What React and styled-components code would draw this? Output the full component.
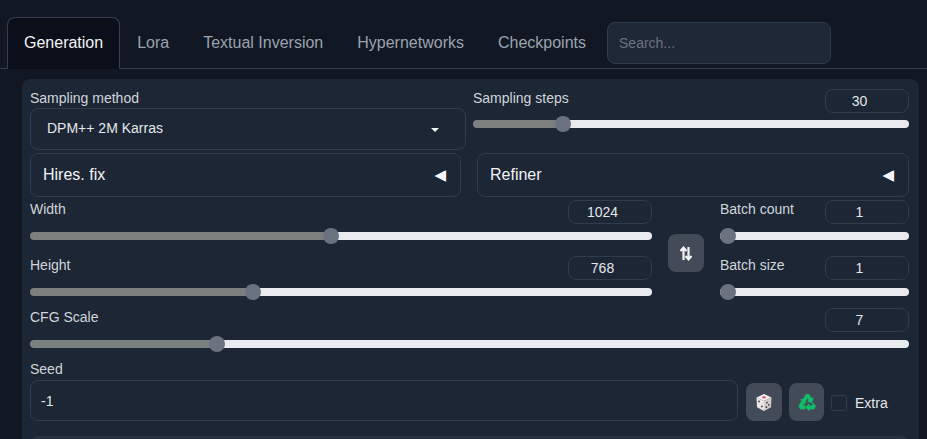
import React from "react";
import styled, { createGlobalStyle } from "styled-components";

const GlobalStyle = createGlobalStyle`
  html, body {
    margin: 0;
    height: 100%;
    background: #111823;
    overflow: hidden;
  }
  * { box-sizing: border-box; }
`;

const Page = styled.div`
  height: 439px;
  overflow: hidden;
  padding-top: 17px;
  font-family: "Liberation Sans", Arial, sans-serif;
  color: #e5e7eb;
`;

const TabBar = styled.div`
  display: flex;
  align-items: stretch;
  height: 52px;
  padding-left: 7px;
  border-bottom: 1px solid #364050;
`;

const Tab = styled.div`
  display: flex;
  align-items: center;
  padding: 0 16px;
  font-size: 16px;
  color: ${(p) => (p.$active ? "#f3f4f6" : "#9ca3af")};
  background: ${(p) => (p.$active ? "#0b0f19" : "transparent")};
  border: 1px solid ${(p) => (p.$active ? "#364050" : "transparent")};
  border-bottom: ${(p) => (p.$active ? "1px solid #0b0f19" : "none")};
  border-radius: 8px 8px 0 0;
  margin-bottom: ${(p) => (p.$active ? "-1px" : "0")};
`;

const SearchBox = styled.input`
  width: 224px;
  height: 42px;
  margin: 5px 0 0 4px;
  padding: 0 11px;
  font: 14px "Liberation Sans", Arial, sans-serif;
  color: #e5e7eb;
  background: #1e2836;
  border: 1px solid #303b4c;
  border-radius: 8px;
  outline: none;
  &::placeholder { color: #6b7280; opacity: 1; }
`;

const Panel = styled.div`
  margin: 10px 8px 0 22px;
  height: 400px;
  padding: 9px 10px 0 8px;
  background: #1c2635;
  border-radius: 8px 8px 0 0;
  display: flex;
  flex-direction: column;
`;

const TwoCols = styled.div`
  display: grid;
  grid-template-columns: 436px 436px;
  column-gap: 7px;
  height: 62px;
`;

const Label = styled.div`
  font-size: 14px;
  line-height: 20px;
  color: #d1d5db;
`;

const HeadLabel = styled(Label)`
  line-height: 18px;
`;

const SelectBox = styled.div`
  height: 42px;
  padding: 0 26px 2px 16px;
  display: flex;
  align-items: center;
  justify-content: space-between;
  font-size: 14px;
  color: #e5e7eb;
  border: 1px solid #303b4c;
  border-radius: 8px;
`;

const SmallCaret = styled.span`
  width: 0;
  height: 0;
  margin-top: 4px;
  border-left: 4px solid transparent;
  border-right: 4px solid transparent;
  border-top: 4px solid #f3f4f6;
`;

const Accordions = styled.div`
  display: grid;
  grid-template-columns: 431px 432px;
  column-gap: 16px;
  margin-top: 3px;
`;

const Accordion = styled.div`
  height: 44px;
  padding: 0 14px 0 12px;
  display: flex;
  align-items: center;
  justify-content: space-between;
  font-size: 16px;
  color: #f3f4f6;
  border: 1px solid #303b4c;
  border-radius: 8px;
`;

const AccordionCaret = styled.span`
  font-family: "DejaVu Sans", sans-serif;
  font-size: 15px;
  line-height: 1;
  color: #f9fafb;
`;

const SizeRow = styled.div`
  display: grid;
  grid-template-columns: 622px 68px 189px;
  margin-top: 3px;
`;

const SliderStack = styled.div`
  display: flex;
  flex-direction: column;
  gap: 12px;
`;

const SliderBlock = styled.div`
  display: flex;
  flex-direction: column;
  gap: 4px;
`;

const SliderHead = styled.div`
  display: flex;
  justify-content: space-between;
  height: 24px;
`;

const StepsHead = styled(SliderHead)`
  margin: 1px 0 -1px;
`;

const NumberBox = styled.div`
  width: 84px;
  height: 24px;
  padding-right: 15px;
  display: flex;
  align-items: center;
  justify-content: center;
  font-size: 14px;
  color: #e5e7eb;
  border: 1px solid #303b4c;
  border-radius: 8px;
`;

const Range = styled.input`
  -webkit-appearance: none;
  appearance: none;
  display: block;
  width: 100%;
  height: 16px;
  margin: 0;
  background: transparent;
  outline: none;
  &::-webkit-slider-runnable-track {
    height: 8px;
    border-radius: 4px;
    background: linear-gradient(
      to right,
      #7b807f var(--fill),
      #e9ebef var(--fill)
    );
  }
  &::-webkit-slider-thumb {
    -webkit-appearance: none;
    width: 16px;
    height: 16px;
    margin-top: -4px;
    border-radius: 50%;
    background: #6b7280;
    border: none;
  }
`;

const SwapCell = styled.div`
  display: flex;
  justify-content: center;
  padding-top: 34px;
`;

const IconButton = styled.div`
  width: ${(p) => p.$w || 36}px;
  height: 38px;
  display: flex;
  align-items: center;
  justify-content: center;
  background: #434b58;
  border-radius: 8px;
`;

const CfgBlock = styled(SliderBlock)`
  margin-top: 8px;
`;

const SeedBlock = styled.div`
  margin-top: 7px;
`;

const SeedRow = styled.div`
  display: flex;
  align-items: flex-end;
  margin-top: 1px;
`;

const SeedInput = styled.div`
  width: 708px;
  height: 41px;
  margin-right: 8px;
  padding: 0 10px;
  display: flex;
  align-items: center;
  font-size: 14px;
  color: #e5e7eb;
  border: 1px solid #303b4c;
  border-radius: 8px;
`;

const SeedButtons = styled.div`
  display: flex;
  gap: 7px;
`;

const CheckLabel = styled.div`
  display: flex;
  align-items: center;
  gap: 8px;
  height: 38px;
  padding-top: 2px;
  margin-left: 7px;
  font-size: 14px;
  color: #e5e7eb;
`;

const CheckBox = styled.span`
  width: 16px;
  height: 16px;
  background: #1c2635;
  border: 1px solid #303b4c;
  border-radius: 3px;
`;

const NextSection = styled.div`
  height: 20px;
  margin-top: 15px;
  background: #273140;
  border-radius: 8px 8px 0 0;
`;

const Slider = ({ min, max, step = 1, value }) => (
  <Range
    type="range"
    min={min}
    max={max}
    step={step}
    defaultValue={value}
    style={{ "--fill": `${((value - min) / (max - min)) * 100}%` }}
  />
);

const LabeledSlider = ({ label, min, max, value }) => (
  <SliderBlock>
    <SliderHead>
      <HeadLabel>{label}</HeadLabel>
      <NumberBox>{value}</NumberBox>
    </SliderHead>
    <Slider min={min} max={max} value={value} />
  </SliderBlock>
);

const SwapIcon = () => (
  <svg width="14" height="15" viewBox="0 0 14 15" fill="none" stroke="#f3f4f6" strokeWidth="2.2">
    <path d="M4.500 14V2M1.500 5l3-3.400 3 3.400" />
    <path d="M9.500 1v12M6.500 10l3 3.400 3-3.400" />
  </svg>
);

const DiceIcon = () => (
  <svg width="18" height="19" viewBox="0 0 18 19">
    <path d="M9 1 16.5 4.4 9 8 1.500 4.400Z" fill="#f6f1f1" />
    <path d="M1.500 4.400 9 8v10l-7-3.800Z" fill="#ebe6e6" />
    <path d="M16.500 4.400 9 8v10l7-3.800Z" fill="#d2cccc" />
    <ellipse cx="9" cy="4.400" rx="2" ry="1.100" fill="#e2566c" />
    <circle cx="4" cy="8.500" r=".9" fill="#4a4a52" />
    <circle cx="6.800" cy="13.500" r=".9" fill="#4a4a52" />
    <circle cx="12" cy="9.600" r=".9" fill="#3e3e46" />
    <circle cx="13.800" cy="11.800" r=".9" fill="#3e3e46" />
    <circle cx="11.400" cy="14.200" r=".9" fill="#3e3e46" />
  </svg>
);

const RecycleIcon = () => (
  <svg width="18" height="18" viewBox="0 0 18 18" fill="#10bd68" stroke="#10bd68" strokeWidth=".8" strokeLinejoin="round">
    <path d="M5 6.500 8 1.500h3l2.500 4 1.500-.8-.8 4.800-4.700-1 1.500-.9L9.500 4.500 7.500 8Z" />
    <path d="M4.800 6.800.8 12.800 2.500 16H7v-3.800H4.500l1.700-2.600 1.300.8-.7-4.500-4.400 1.200Z" />
    <path d="M15.500 10.500 17.500 13 16 16h-5v1.500l-3.300-3.200L11 11v2h3l1-1.500-1-1Z" />
  </svg>
);

export default function App() {
  return (
    <Page>
      <GlobalStyle />
      <TabBar>
        <Tab $active>Generation</Tab>
        <Tab>Lora</Tab>
        <Tab>Textual Inversion</Tab>
        <Tab>Hypernetworks</Tab>
        <Tab>Checkpoints</Tab>
        <SearchBox placeholder="Search..." />
      </TabBar>
      <Panel>
        <TwoCols>
          <div>
            <Label>Sampling method</Label>
            <SelectBox>
              DPM++ 2M Karras
              <SmallCaret />
            </SelectBox>
          </div>
          <SliderBlock>
            <StepsHead>
              <HeadLabel>Sampling steps</HeadLabel>
              <NumberBox>30</NumberBox>
            </StepsHead>
            <Slider min={1} max={150} value={30} />
          </SliderBlock>
        </TwoCols>
        <Accordions>
          <Accordion>
            Hires. fix
            <AccordionCaret>◀</AccordionCaret>
          </Accordion>
          <Accordion>
            Refiner
            <AccordionCaret>◀</AccordionCaret>
          </Accordion>
        </Accordions>
        <SizeRow>
          <SliderStack>
            <LabeledSlider label="Width" min={64} max={2048} value={1024} />
            <LabeledSlider label="Height" min={64} max={2048} value={768} />
          </SliderStack>
          <SwapCell>
            <IconButton>
              <SwapIcon />
            </IconButton>
          </SwapCell>
          <SliderStack>
            <LabeledSlider label="Batch count" min={1} max={100} value={1} />
            <LabeledSlider label="Batch size" min={1} max={8} value={1} />
          </SliderStack>
        </SizeRow>
        <CfgBlock>
          <SliderHead>
            <HeadLabel>CFG Scale</HeadLabel>
            <NumberBox>7</NumberBox>
          </SliderHead>
          <Slider min={1} max={30} step={0.5} value={7} />
        </CfgBlock>
        <SeedBlock>
          <Label>Seed</Label>
          <SeedRow>
            <SeedInput>-1</SeedInput>
            <SeedButtons>
              <IconButton>
                <DiceIcon />
              </IconButton>
              <IconButton $w={35}>
                <RecycleIcon />
              </IconButton>
            </SeedButtons>
            <CheckLabel>
              <CheckBox />
              Extra
            </CheckLabel>
          </SeedRow>
        </SeedBlock>
        <NextSection />
      </Panel>
    </Page>
  );
}
